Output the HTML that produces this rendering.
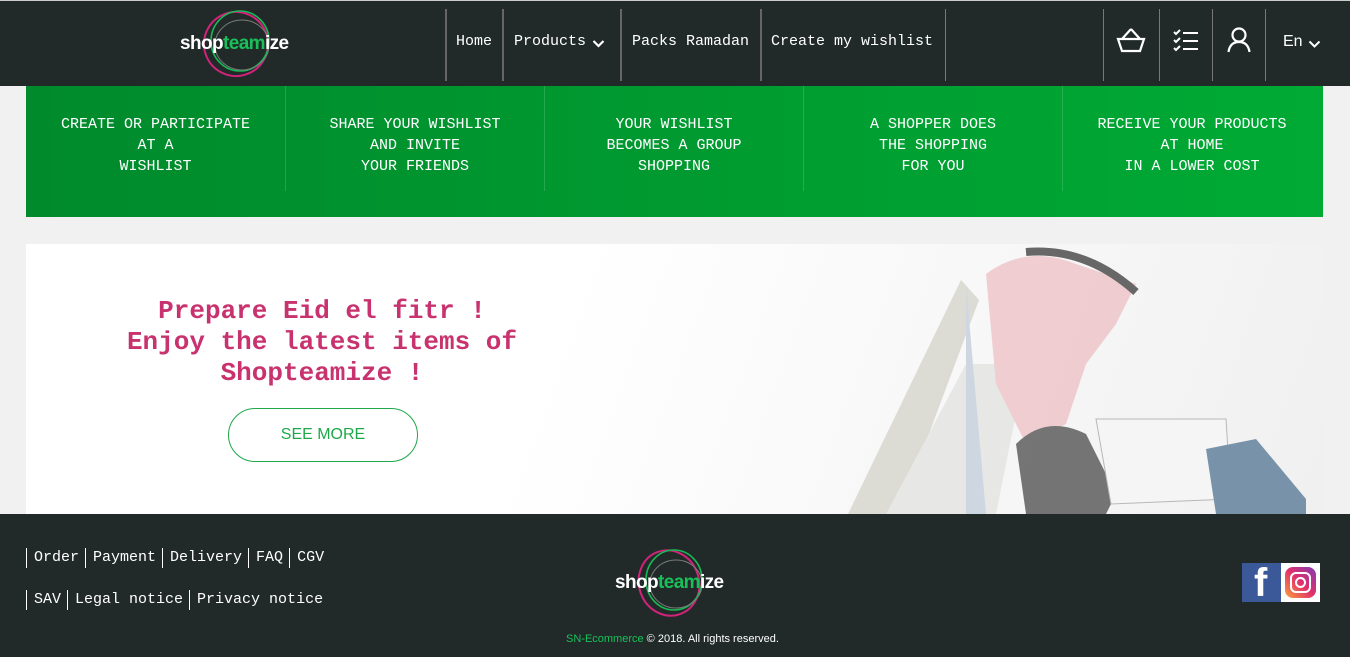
<!DOCTYPE html>
<html><head><meta charset="utf-8"><style>
*{margin:0;padding:0;box-sizing:border-box}
body{width:1350px;height:657px;background:#f1f1f1;font-family:"Liberation Mono",monospace;position:relative;overflow:hidden}
.hdr{position:absolute;left:0;top:0;width:1350px;height:86px;background:#212a28;border-top:1px solid #ccc}
.nav a{position:absolute;top:32px;color:#fff;font-size:15px;text-decoration:none;white-space:nowrap}
.vl{position:absolute;top:8px;width:2px;height:72px;background:#666}
.vl2{position:absolute;top:8px;width:1px;height:72px;background:#777}
.band{position:absolute;left:26px;top:86px;width:1297px;height:131px;background:linear-gradient(90deg,#008a2c,#00aa34)}
.col{position:absolute;top:0;width:259px;height:105px;color:#fff;font-size:15px;line-height:21px;text-align:center;padding-top:28px;white-space:nowrap}
.col+.col{border-left:1px solid rgba(255,255,255,.15)}
.ban{position:absolute;left:26px;top:244px;width:1297px;height:270px;background:linear-gradient(110deg,#fff 40%,#f0f0f0)}
.ttl{position:absolute;left:46px;top:52px;width:500px;text-align:center;color:#c8336f;font-weight:bold;font-size:26px;line-height:31px;white-space:nowrap}
.btn{position:absolute;left:202px;top:164px;width:190px;height:54px;border:1px solid #1ea84a;border-radius:27px;color:#1ea84a;font-family:"Liberation Sans",sans-serif;font-size:16px;text-align:center;line-height:52px}
.ftr{position:absolute;left:0;top:514px;width:1350px;height:143px;background:#212a28}
.fl{position:absolute;left:26px;color:#fff;font-size:15px;white-space:nowrap}
.fl span{border-left:1px solid #fff;padding:0 6px 0 7px;display:inline-block;line-height:20px}
</style></head><body>
<div class="hdr">
<svg style="position:absolute;left:178px;top:6px" width="115" height="74" viewBox="0 0 115 74">
<ellipse cx="58" cy="37" rx="32" ry="32" fill="none" stroke="#d0237a" stroke-width="2" transform="rotate(-20 58 37)"/>
<ellipse cx="62" cy="34" rx="29" ry="30" fill="none" stroke="#19b956" stroke-width="1.6"/>
<ellipse cx="64" cy="38" rx="27" ry="25" fill="none" stroke="#7a7a7a" stroke-width="1"/>
<text x="2" y="42" font-family="Liberation Sans" font-weight="bold" font-size="19" fill="#fff" letter-spacing="-0.6">shop<tspan fill="#19c05a">team</tspan>ize</text>
</svg>
<div class="vl" style="left:445px"></div><div class="vl" style="left:502px"></div><div class="vl" style="left:620px"></div><div class="vl" style="left:760px"></div><div class="vl2" style="left:945px"></div>
<div class="nav"><a style="left:456px">Home</a><a style="left:514px">Products</a><a style="left:632px">Packs Ramadan</a><a style="left:771px">Create my wishlist</a></div>
<svg style="position:absolute;left:592px;top:38px" width="13" height="9" viewBox="0 0 13 9" fill="none" stroke="#fff" stroke-width="2.2"><path d="M1.5 2l5 5 5-5"/></svg>
<div class="vl2" style="left:1103px"></div><div class="vl2" style="left:1159px"></div><div class="vl2" style="left:1212px"></div><div class="vl2" style="left:1265px"></div>
<svg style="position:absolute;left:1116px;top:26px" width="30" height="26" viewBox="0 0 30 26" fill="none" stroke="#fff" stroke-width="2.2"><path d="M15 2L6 12M15 2l9 10M2 12h26l-4 12H6z"/></svg>
<svg style="position:absolute;left:1172px;top:28px" width="28" height="24" viewBox="0 0 28 24" fill="none" stroke="#fff" stroke-width="2"><path d="M2 3l2 2 4-4M2 11l2 2 4-4M2 19l2 2 4-4M11 4h15M11 12h15M11 20h15"/></svg>
<svg style="position:absolute;left:1227px;top:26px" width="24" height="26" viewBox="0 0 24 26" fill="none" stroke="#fff" stroke-width="2.2"><circle cx="12" cy="8" r="6.5"/><path d="M1.5 25c1-7 5-10 10.5-10s9.5 3 10.5 10"/></svg>
<div style="position:absolute;left:1283px;top:32px;color:#fff;font-family:'Liberation Sans',sans-serif;font-size:16px">En</div>
<svg style="position:absolute;left:1308px;top:39px" width="13" height="8" viewBox="0 0 13 8" fill="none" stroke="#fff" stroke-width="2"><path d="M1.5 1.5l5 5 5-5"/></svg>
</div>
<div class="band">
<div class="col" style="left:0">CREATE OR PARTICIPATE<br>AT A<br>WISHLIST</div>
<div class="col" style="left:259px">SHARE YOUR WISHLIST<br>AND INVITE<br>YOUR FRIENDS</div>
<div class="col" style="left:518px">YOUR WISHLIST<br>BECOMES A GROUP<br>SHOPPING</div>
<div class="col" style="left:777px">A SHOPPER DOES<br>THE SHOPPING<br>FOR YOU</div>
<div class="col" style="left:1036px">RECEIVE YOUR PRODUCTS<br>AT HOME<br>IN A LOWER COST</div>
</div>
<div class="ban">
<svg style="position:absolute;left:800px;top:0;opacity:.8" width="497" height="270" viewBox="0 0 497 270">
<path d="M22 270L135 36l18 20-80 214z" fill="#d6d4cc"/>
<path d="M60 270l80-150 60 0 -30 150z" fill="#e4e4e2"/>
<path d="M140 40l20 230h-20z" fill="#c5d0dc"/>
<path d="M160 30q40-30 90-10l60 20-20 40-30 40-20 60-40 20-30-60z" fill="#eec3c8"/>
<path d="M200 8q60-5 110 40" stroke="#444" stroke-width="8" fill="none"/>
<path d="M190 200q30-30 70-10l30 60-10 20h-80z" fill="#555"/>
<path d="M270 175l130 0 5 80-120 5z" fill="#f6f6f6" stroke="#aaa"/>
<path d="M380 205l50-10 50 60 0 15h-90z" fill="#5a7c98"/>
</svg>
<div class="ttl">Prepare Eid el fitr !<br>Enjoy the latest items of<br>Shopteamize !</div>
<div class="btn">SEE MORE</div>
</div>
<div class="ftr">
<div class="fl" style="top:34px"><span>Order</span><span>Payment</span><span>Delivery</span><span>FAQ</span><span>CGV</span></div>
<div class="fl" style="top:76px"><span>SAV</span><span>Legal notice</span><span>Privacy notice</span><span style="padding:0"></span></div>
<svg style="position:absolute;left:614px;top:32px" width="120" height="74" viewBox="0 0 120 74">
<ellipse cx="55" cy="37" rx="30" ry="33" fill="none" stroke="#d0237a" stroke-width="2" transform="rotate(-20 55 37)"/>
<ellipse cx="60" cy="34" rx="28" ry="30" fill="none" stroke="#19b956" stroke-width="1.6"/>
<ellipse cx="62" cy="38" rx="26" ry="24" fill="none" stroke="#7a7a7a" stroke-width="1"/>
<text x="1" y="42" font-family="Liberation Sans" font-weight="bold" font-size="19" fill="#fff" letter-spacing="-0.6">shop<tspan fill="#19c05a">team</tspan>ize</text>
</svg>
<div style="position:absolute;left:566px;top:119px;font-family:'Liberation Sans',sans-serif;font-size:11px;color:#fff"><span style="color:#19c05a">SN-Ecommerce</span> © 2018. All rights reserved.</div>
<div style="position:absolute;left:1242px;top:49px;width:39px;height:39px;background:#3b5998;overflow:hidden"><span style="position:absolute;left:12px;top:-2px;color:#fff;font-family:'Liberation Sans';font-weight:bold;font-size:40px">f</span></div>
<div style="position:absolute;left:1281px;top:49px;width:39px;height:39px;background:#fff"><div style="position:absolute;left:4px;top:4px;width:31px;height:31px;border-radius:8px;background:linear-gradient(45deg,#f9a13a,#e1306c,#833ab4)"><div style="position:absolute;left:5px;top:5px;width:21px;height:21px;border:2px solid #fff;border-radius:6px"></div><div style="position:absolute;left:10px;top:10px;width:11px;height:11px;border:2px solid #fff;border-radius:50%"></div></div></div>
</div>
</body></html>
